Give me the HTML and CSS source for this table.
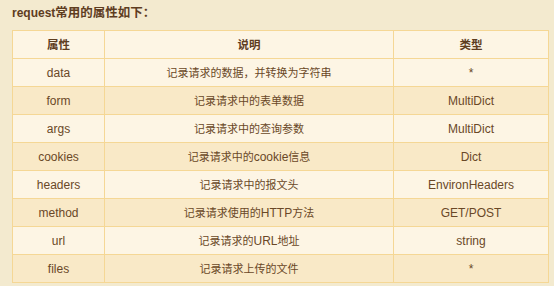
FILE: index.html
```html
<!DOCTYPE html>
<html>
<head>
<meta charset="utf-8">
<link rel="stylesheet" href="styles.css">
</head>
<body>
<div class="page">
  <p class="title">request<span class="zh">常用的属性如下：</span></p>
  <table class="attrs">
    <colgroup><col class="c1"><col class="c2"><col class="c3"></colgroup>
    <thead>
      <tr><th><span class="zh">属性</span></th><th><span class="zh">说明</span></th><th><span class="zh">类型</span></th></tr>
    </thead>
    <tbody>
      <tr><td>data</td><td><span class="zh">记录请求的数据，并转换为字符串</span></td><td>*</td></tr>
      <tr><td>form</td><td><span class="zh">记录请求中的表单数据</span></td><td>MultiDict</td></tr>
      <tr><td>args</td><td><span class="zh">记录请求中的查询参数</span></td><td>MultiDict</td></tr>
      <tr><td>cookies</td><td><span class="zh">记录请求中的</span>cookie<span class="zh">信息</span></td><td>Dict</td></tr>
      <tr><td>headers</td><td><span class="zh">记录请求中的报文头</span></td><td>EnvironHeaders</td></tr>
      <tr><td>method</td><td><span class="zh">记录请求使用的</span>HTTP<span class="zh">方法</span></td><td>GET/POST</td></tr>
      <tr><td>url</td><td><span class="zh">记录请求的</span>URL<span class="zh">地址</span></td><td>string</td></tr>
      <tr><td>files</td><td><span class="zh">记录请求上传的文件</span></td><td>*</td></tr>
    </tbody>
  </table>
</div>
</body>
</html>
```
FILE: styles.css
```css
html, body {
  margin: 0;
  padding: 0;
  background: #f3eacf;
}
.page {
  width: 554px;
  height: 286px;
  padding: 4px 6px 0 12px;
  box-sizing: border-box;
  font-family: "Liberation Sans", Arial, "Noto Sans CJK SC", sans-serif;
  color: #6a4827;
}
.title {
  margin: 0 0 8px 0;
  font-size: 12px;
  font-weight: bold;
  line-height: 18px;
  color: #5e3d1f;
}
.title .zh { font-size: 12.5px; }
.attrs {
  width: 536px;
  border-collapse: collapse;
  table-layout: fixed;
  font-size: 12px;
}
.c1 { width: 92px; }
.c2 { width: 289px; }
.c3 { width: 155px; }
.attrs th, .attrs td {
  border: 1px solid #f5d795;
  height: 28px;
  padding: 0;
  text-align: center;
  vertical-align: middle;
  line-height: 14px;
  box-sizing: border-box;
}
.attrs td .zh { font-size: 11px; }
.attrs th .zh { font-size: 11.5px; }
.attrs th {
  font-weight: bold;
  color: #5e3d1f;
  background: #fdf5e4;
}
.attrs tbody tr:nth-child(odd) td { background: #fdf5e4; }
.attrs tbody tr:nth-child(even) td { background: #f9e9c7; }
```
